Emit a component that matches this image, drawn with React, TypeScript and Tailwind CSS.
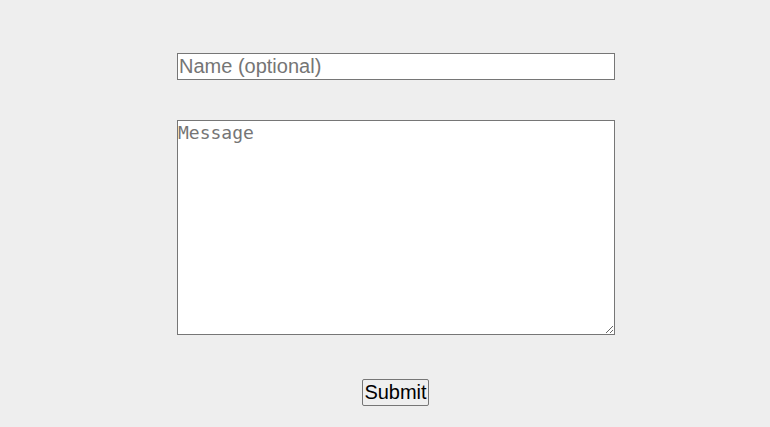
export default function App() {
  return (
    <div className="min-h-[427px] w-full bg-[#eeeeee] pt-[53px]">
      <form className="ml-[177px] flex w-[438px] flex-col">
        <input
          type="text"
          placeholder="Name (optional)"
          className="box-border h-[27px] w-full border border-[#767676] bg-white px-[1px] font-['Liberation_Sans',Arial,sans-serif] text-[20px] leading-[25px] text-black outline-none placeholder:text-[#757575]"
        />
        <textarea
          placeholder="Message"
          className="mt-[40px] box-border h-[215px] w-full resize-y border border-[#767676] bg-white p-0 font-['DejaVu_Sans_Mono',monospace] text-[18px] leading-[24px] text-black outline-none placeholder:text-[#757575]"
        />
        <div className="mt-[44px] flex">
          <button
            type="button"
            className="ml-[185px] box-border h-[27px] w-[67px] rounded-[2px] border border-[#767676] bg-[#efefef] font-['Liberation_Sans',Arial,sans-serif] text-[20px] leading-[25px] text-black"
          >
            Submit
          </button>
        </div>
      </form>
    </div>
  );
}
